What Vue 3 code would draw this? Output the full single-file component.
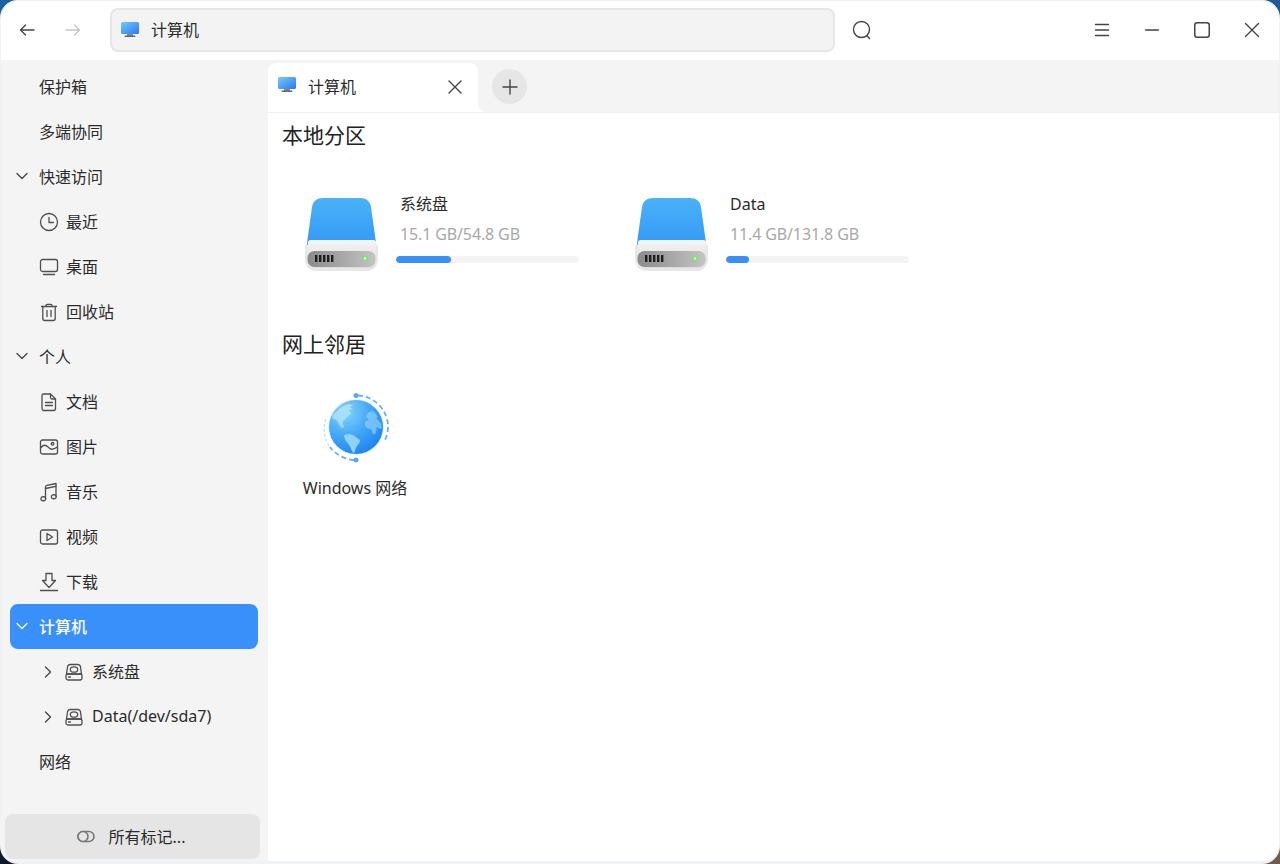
<script setup>
const icons = {
  clock: ['M10 1.500a8.500 8.500 0 1 0 0 17a8.500 8.500 0 1 0 0-17z', 'M10 5.500v5h4.500'],
  desk: ['M3.500 2.500h13a2 2 0 0 1 2 2v8a2 2 0 0 1-2 2h-13a2 2 0 0 1-2-2v-8a2 2 0 0 1 2-2z', 'M4.500 17.500h11'],
  trash: ['M2.500 4.500h15', 'M7 4.500v-1.200a1 1 0 0 1 1-1h4a1 1 0 0 1 1 1v1.200', 'M3.800 4.500v12a2 2 0 0 0 2 2h8.400a2 2 0 0 0 2-2v-12', 'M8 8.500v6', 'M12 8.500v6'],
  doc: ['M4.500 2h7l5 5v9.500a2 2 0 0 1-2 2h-10a2 2 0 0 1-1.500-2v-13a1.500 1.500 0 0 1 1.500-1.500z', 'M11.500 2v3.500a1.500 1.500 0 0 0 1.500 1.500h3.500', 'M6.500 10.500h7', 'M6.500 13.500h7'],
  pic: ['M3.500 3h13a2 2 0 0 1 2 2v10a2 2 0 0 1-2 2h-13a2 2 0 0 1-2-2v-10a2 2 0 0 1 2-2z', 'M1.500 11c3-3.500 5-3.500 7.500-1s4 3.500 9.500 0', 'M13.500 5.500a1.300 1.300 0 1 0 0 2.600a1.300 1.300 0 1 0 0-2.600z'],
  music: ['M6.500 16.500v-11.500c0-1 .5-1.500 1.500-1.700l9-1.800v13', 'M6.500 6.500l10.500-2.200', 'M4.300 14.800a2 2 0 1 0 0 3.900a2 2 0 1 0 0-3.900z', 'M14.800 12.800a2 2 0 1 0 0 3.900a2 2 0 1 0 0-3.900z'],
  video: ['M3.500 3h13a2 2 0 0 1 2 2v10a2 2 0 0 1-2 2h-13a2 2 0 0 1-2-2v-10a2 2 0 0 1 2-2z', 'M8 6.500v7l5.500-3.500z'],
  down: ['M7 1.500h6v7h3.500l-6.500 7l-6.500-7h3.500z', 'M1.500 18.500h17'],
  drive: ['M5 1.500h8a2.500 2.500 0 0 1 2.400 2l1.100 7.500h-15l1.100-7.500a2.500 2.500 0 0 1 2.400-2z', 'M3 11h12a2 2 0 0 1 2 2v2a2 2 0 0 1-2 2h-12a2 2 0 0 1-2-2v-2a2 2 0 0 1 2-2z', 'M9 3.800c2.200 0 3.700 1.200 3.700 2.700s-1.500 2.700-3.700 2.700s-3.700-1.200-3.700-2.700s1.500-2.700 3.700-2.700z', 'M3.500 14h2']
}

const rows = [
  { label: '保护箱', kind: 'top' },
  { label: '多端协同', kind: 'top' },
  { label: '快速访问', kind: 'group' },
  { label: '最近', kind: 'item', icon: 'clock' },
  { label: '桌面', kind: 'item', icon: 'desk' },
  { label: '回收站', kind: 'item', icon: 'trash' },
  { label: '个人', kind: 'group' },
  { label: '文档', kind: 'item', icon: 'doc' },
  { label: '图片', kind: 'item', icon: 'pic' },
  { label: '音乐', kind: 'item', icon: 'music' },
  { label: '视频', kind: 'item', icon: 'video' },
  { label: '下载', kind: 'item', icon: 'down' },
  { label: '计算机', kind: 'group', active: true },
  { label: '系统盘', kind: 'sub', icon: 'drive' },
  { label: 'Data(/dev/sda7)', kind: 'sub', icon: 'drive' },
  { label: '网络', kind: 'top' }
]

const drives = [
  { name: '系统盘', size: '15.1 GB/54.8 GB', used: 30 },
  { name: 'Data', size: '11.4 GB/131.8 GB', used: 12.500 }
]
</script>

<template>
  <div class="desktop">
    <i class="corner tl"></i><i class="corner tr"></i><i class="corner bl"></i><i class="corner br"></i>
    <div class="window">
      <header class="topbar">
        <button class="nav first">
          <svg width="16" height="16" viewBox="0 0 16 16"><path class="ln dark" d="M15 8H1.500M6.500 3L1.500 8l5 5" /></svg>
        </button>
        <button class="nav">
          <svg width="16" height="16" viewBox="0 0 16 16"><path class="ln faint" d="M1 8h13.500M9.500 3l5 5l-5 5" /></svg>
        </button>
        <div class="address">
          <svg class="monitor" width="20" height="18" viewBox="0 0 20 18"><use href="#pc" /></svg>
          <span>计算机</span>
        </div>
        <button class="search">
          <svg width="20" height="20" viewBox="0 0 20 20"><path class="ln dark" d="M9.500 1.500a8 8 0 1 0 0 16a8 8 0 1 0 0-16zM14.800 15.500l2.700 3" /></svg>
        </button>
        <div class="winctl">
          <button><svg width="16" height="16" viewBox="0 0 16 16"><path class="ln dark" d="M1.500 2.500h13M1.500 8h13M1.500 13.500h13" /></svg></button>
          <button><svg width="16" height="16" viewBox="0 0 16 16"><path class="ln dark" d="M1.500 8h13" /></svg></button>
          <button><svg width="16" height="16" viewBox="0 0 16 16"><rect class="ln dark thick" x=".75" y=".75" width="14.500" height="14.500" rx="2.500" /></svg></button>
          <button><svg width="16" height="16" viewBox="0 0 16 16"><path class="ln dark" d="M1.500 1.500l13 13M14.500 1.500l-13 13" /></svg></button>
        </div>
      </header>

      <div class="body">
        <aside class="sidebar">
          <nav class="rows">
            <div v-for="r in rows" :key="r.label" class="row" :class="[r.kind, { active: r.active }]">
              <svg v-if="r.kind === 'group'" class="chev" width="12" height="8" viewBox="0 0 12 8"><path d="M1 1.500l5 5l5-5" /></svg>
              <svg v-if="r.kind === 'sub'" class="chev" width="8" height="12" viewBox="0 0 8 12"><path d="M1.500 1l5 5l-5 5" /></svg>
              <svg v-if="r.icon" class="icon" :viewBox="r.kind === 'sub' ? '0 0 18 18' : '0 0 20 20'">
                <path v-for="d in icons[r.icon]" :key="d" :d="d" />
              </svg>
              <span>{{ r.label }}</span>
            </div>
          </nav>
          <button class="tags">
            <svg width="18" height="13" viewBox="0 0 18 13"><rect x="1" y="1.500" width="16" height="10" rx="5" fill="none" stroke="#777" stroke-width="1.600" /><circle cx="6" cy="6.500" r="5" fill="#e5e5e5" stroke="#777" stroke-width="1.600" /></svg>
            <span>所有标记...</span>
          </button>
        </aside>

        <main class="main">
          <div class="tabbar">
            <div class="tab">
              <svg class="monitor" width="20" height="18" viewBox="0 0 20 18"><use href="#pc" /></svg>
              <span>计算机</span>
              <svg class="tabclose" width="14" height="14" viewBox="0 0 14 14"><path class="ln dark" d="M1 1l12 12M13 1L1 13" /></svg>
            </div>
            <button class="add">
              <svg width="16" height="16" viewBox="0 0 16 16"><path class="ln dark" d="M8 1v14M1 8h14" /></svg>
            </button>
          </div>

          <section class="content">
            <h2>本地分区</h2>
            <div class="drives">
              <div v-for="d in drives" :key="d.name" class="drive">
                <svg width="84" height="84" viewBox="0 0 84 84">
                  <use href="#hdd" />
                </svg>
                <div class="info">
                  <div class="name">{{ d.name }}</div>
                  <div class="size">{{ d.size }}</div>
                  <div class="bar"><div class="fill" :style="{ width: d.used + '%' }"></div></div>
                </div>
              </div>
            </div>

            <h2 class="net">网上邻居</h2>
            <div class="netitem">
              <svg width="76" height="76" viewBox="318 390 76 76">
                <defs>
                  <radialGradient id="globe" cx="30%" cy="22%" r="88%">
                    <stop offset="0" stop-color="#86d4fb" />
                    <stop offset=".5" stop-color="#45a9f6" />
                    <stop offset="1" stop-color="#1a80f0" />
                  </radialGradient>
                </defs>
                <circle cx="356" cy="427" r="28" fill="#e4f3fd" />
                <circle cx="356" cy="427" r="27" fill="url(#globe)" />
                <path fill="#b4e7fc" opacity=".75" d="M336 412c3-4 8-7 13-8l4 1l-3 2l3 2c-2 1-3 0-4 2c2 1 3 2 1 4c-2 0-2 2-4 3c-1 2-3 2-3 4c-1 2 1 3 1 5l-2 1c-2-1-3-4-4-6c-1-2-3-3-5-3l-1-3c1-2 2-3 4-4z" />
                <path fill="#a6e0fb" opacity=".8" d="M344 435l5-1l4 1l4 3l3 2c0 3-2 4-3 6c-1 2-2 3-2 6l-2 1c-2-3-2-6-4-8c-2-3-5-6-5-10z" />
                <path fill="#9fdcfa" opacity=".55" d="M369 412l4-1l3 3l2 3l-2 1l2 2l3 3l1 5l-2 1l-3-2c-1 2 0 5-2 7c-2 1-3-1-3-3c0-2-3-2-5-3c-2-2-3-4-1-7l3-1c-1-2-3-2-3-4c1-2 2-3 3-4z" />
                <path fill="none" stroke="#66b2ef" stroke-width="1.800" stroke-dasharray="5 3" d="M358 395.500a31.500 31.500 0 0 1 30 31.500a31 31 0 0 1-3 13" />
                <path fill="none" stroke="#66b2ef" stroke-width="1.800" stroke-dasharray="5 3" d="M354 460a33 33 0 0 1-24-13" />
                <path fill="none" stroke="#c2dff7" stroke-width="1.300" stroke-dasharray="3 2" d="M329 446a33 33 0 0 1-3-28" />
                <circle cx="356" cy="395.500" r="2.500" fill="#5aa9ec" />
                <circle cx="356" cy="460" r="2.500" fill="#5aa9ec" />
              </svg>
              <span>Windows 网络</span>
            </div>
          </section>
        </main>
      </div>
    </div>

    <svg class="defs" width="0" height="0">
      <defs>
        <linearGradient id="pcScreen" x1="0" y1="0" x2="1" y2="1">
          <stop offset="0" stop-color="#6fcbfa" />
          <stop offset="1" stop-color="#2f78f2" />
        </linearGradient>
        <linearGradient id="hddBlue" x1="0" y1="0" x2="0" y2="1">
          <stop offset="0" stop-color="#4ab2f8" />
          <stop offset="1" stop-color="#3399f5" />
        </linearGradient>
        <linearGradient id="hddGray" x1="0" y1="0" x2="0" y2="1">
          <stop offset="0" stop-color="#f4f4f4" />
          <stop offset="1" stop-color="#dcdcdc" />
        </linearGradient>
        <linearGradient id="hddSlot" x1="0" y1="0" x2="1" y2="0">
          <stop offset="0" stop-color="#8a8a8a" />
          <stop offset="1" stop-color="#c4c4c4" />
        </linearGradient>
        <symbol id="pc" viewBox="0 0 20 18">
          <rect x="1" y="1" width="18" height="12" rx="1.500" fill="url(#pcScreen)" />
          <rect x="7" y="13" width="6" height="2" fill="#888" />
          <rect x="4.500" y="14.500" width="11" height="1.500" rx=".7" fill="#666" />
        </symbol>
        <symbol id="hdd" viewBox="300 190 84 84">
          <path fill="#c4c4c4" opacity=".4" d="M309 244h66a3 3 0 0 1 3 3v12c0 7-5 12-11 12h-51c-6 0-11-5-11-12v-12a3 3 0 0 1 4-3z" />
          <path fill="url(#hddBlue)" d="M323 198h37c6 0 10 3 11 9l5 36v2h-69v-2l5-36c1-6 5-9 11-9z" />
          <path fill="url(#hddGray)" d="M309.500 240h64c1.500 0 2.500 1 2.700 2.500l.3 15.500c0 6-4 10-9 10h-51c-5 0-9-4-9-10l.3-15.500c.2-1.500 1.200-2.500 2.700-2.500z" />
          <rect x="307.500" y="251" width="68" height="16" rx="7" fill="url(#hddSlot)" />
          <g fill="#1d1d1d">
            <rect x="315" y="255" width="2.400" height="7" />
            <rect x="319" y="255" width="2.400" height="7" />
            <rect x="323" y="255" width="2.400" height="7" />
            <rect x="327" y="255" width="2.400" height="7" />
            <rect x="331" y="255" width="2.400" height="7" />
          </g>
          <circle cx="365" cy="258.500" r="3" fill="#7be06f" />
          <circle cx="365" cy="258.500" r="1.400" fill="#d4ffc9" />
        </symbol>
      </defs>
    </svg>
  </div>
</template>

<style>
html, body { margin: 0; overflow: hidden; }
</style>

<style scoped>
.desktop {
  position: relative;
  width: 1280px;
  height: 864px;
  overflow: hidden;
  font-family: "Noto Sans", "Noto Sans CJK SC", sans-serif;
  font-size: 16px;
  color: #2b2b2b;
}
.corner { position: absolute; width: 30px; height: 30px; }
.tl { left: 0; top: 0; background: #1f609f; }
.tr { right: 0; top: 0; background: #1f5a94; }
.bl { left: 0; bottom: 0; background: #0b1a26; }
.br { right: 0; bottom: 0; background: #6e5c4c; }

.window {
  position: relative;
  box-sizing: border-box;
  height: 864px;
  display: flex;
  flex-direction: column;
  background: #fff;
  border: 1px solid #f0f3f6;
  border-bottom-width: 3px;
  border-radius: 18px;
  overflow: hidden;
}
button {
  border: 0;
  background: none;
  padding: 0;
  font: inherit;
  color: inherit;
  display: flex;
  align-items: center;
  justify-content: center;
}
.ln { fill: none; stroke-width: 1.400; stroke-linecap: round; stroke-linejoin: round; }
.dark { stroke: #444; }
.faint { stroke: #c6c6c6; }
.thick { stroke-width: 1.500; }

.topbar { height: 59px; flex: none; box-sizing: border-box; padding-bottom: 1px; display: flex; align-items: center; }
.nav { width: 46px; height: 44px; }
.nav.first { margin-left: 3px; }
.address {
  box-sizing: border-box;
  margin-left: 14px;
  width: 725px;
  height: 44px;
  display: flex;
  align-items: center;
  gap: 11px;
  padding-left: 8px;
  background: #f3f3f3;
  border: 2px solid #e6e6e6;
  border-radius: 8px;
}
.address span { margin-bottom: 2px; }
.search { width: 20px; height: 20px; margin-left: 17px; }
.winctl { margin-left: auto; margin-right: 2px; display: flex; }
.winctl button { width: 50px; height: 50px; }

.body { flex: 1; min-height: 0; display: flex; }
.sidebar {
  width: 267px;
  flex: none;
  box-sizing: border-box;
  background: #f4f4f4;
  padding-top: 4px;
  display: flex;
  flex-direction: column;
}
.rows { flex: 1; }
.row {
  height: 45px;
  margin: 0 10px 0 9px;
  padding-left: 29px;
  box-sizing: border-box;
  display: flex;
  align-items: center;
  border-radius: 8px;
  position: relative;
}
.row span { margin-bottom: 2px; }
.group .chev { position: absolute; left: 6px; top: 18px; }
.chev path { fill: none; stroke: #444; stroke-width: 1.300; stroke-linecap: round; stroke-linejoin: round; }
.icon { flex: none; width: 20px; height: 20px; margin-right: 7px; }
.icon path { fill: none; stroke: #4f4f4f; stroke-width: 1.300; stroke-linecap: round; stroke-linejoin: round; }
.sub .chev { flex: none; margin-left: 5px; margin-right: 13px; }
.sub .icon { width: 18px; height: 18px; margin-right: 9px; }
.active { background: #3a90fb; color: #fff; font-weight: 500; }
.active .chev path { stroke: #fff; }
.tags {
  margin: 0 8px 2px 4px;
  height: 45px;
  flex: none;
  gap: 14px;
  padding-right: 3px;
  background: #e5e5e5;
  border-radius: 8px;
}
.tags span { margin-bottom: 2px; }

.main { flex: 1; min-width: 0; display: flex; flex-direction: column; }
.tabbar {
  height: 53px;
  flex: none;
  box-sizing: border-box;
  padding-top: 3px;
  background: #f4f4f4;
  display: flex;
  border-bottom: 1px solid #f0f0f0;
}
.tab {
  position: relative;
  width: 210px;
  height: 49px;
  box-sizing: border-box;
  background: #fff;
  border-radius: 8px 8px 0 0;
  display: flex;
  align-items: center;
  gap: 11px;
  padding: 0 16px 2px 9px;
}
.tab::after {
  content: "";
  position: absolute;
  right: -8px;
  bottom: 0;
  width: 8px;
  height: 8px;
  background: radial-gradient(circle at 100% 0, #f4f4f4 7.500px, #fff 8.500px);
}
.tab span { margin-bottom: 2px; }
.tab .monitor { margin-bottom: 3px; }
.tabclose { margin-left: auto; }
.add {
  width: 35px;
  height: 35px;
  margin: 6px 0 0 14px;
  border-radius: 50%;
  background: #e6e6e6;
}

.content { flex: 1; padding: 0 0 0 13px; }
h2 {
  margin: 0;
  font-size: 21px;
  font-weight: 400;
  line-height: 30px;
  padding: 7px 0 0 1px;
  color: #222;
}
.drives { display: flex; margin-top: 39px; margin-left: 19px; }
.drive { width: 330px; display: flex; align-items: flex-start; height: 84px; }
.drive > svg { flex: none; margin-top: 1px; }
.info { margin-left: 12px; width: 183px; }
.name { height: 30px; line-height: 30px; padding-left: 4px; }
.size { height: 30px; line-height: 30px; padding-left: 4px; color: #a8a8a8; letter-spacing: -0.13px; }
.bar { height: 7px; margin-top: 7px; border-radius: 4px; background: #f4f4f4; overflow: hidden; }
.fill { height: 100%; border-radius: 4px; background: #3a90fb; }
.net { margin-top: 49px; }
.netitem {
  width: 148px;
  margin-top: 31px;
  display: flex;
  flex-direction: column;
  align-items: center;
}
.netitem svg { margin-left: 2px; }
.netitem span { margin-top: 10px; line-height: 24px; }
.defs { position: absolute; }
</style>
